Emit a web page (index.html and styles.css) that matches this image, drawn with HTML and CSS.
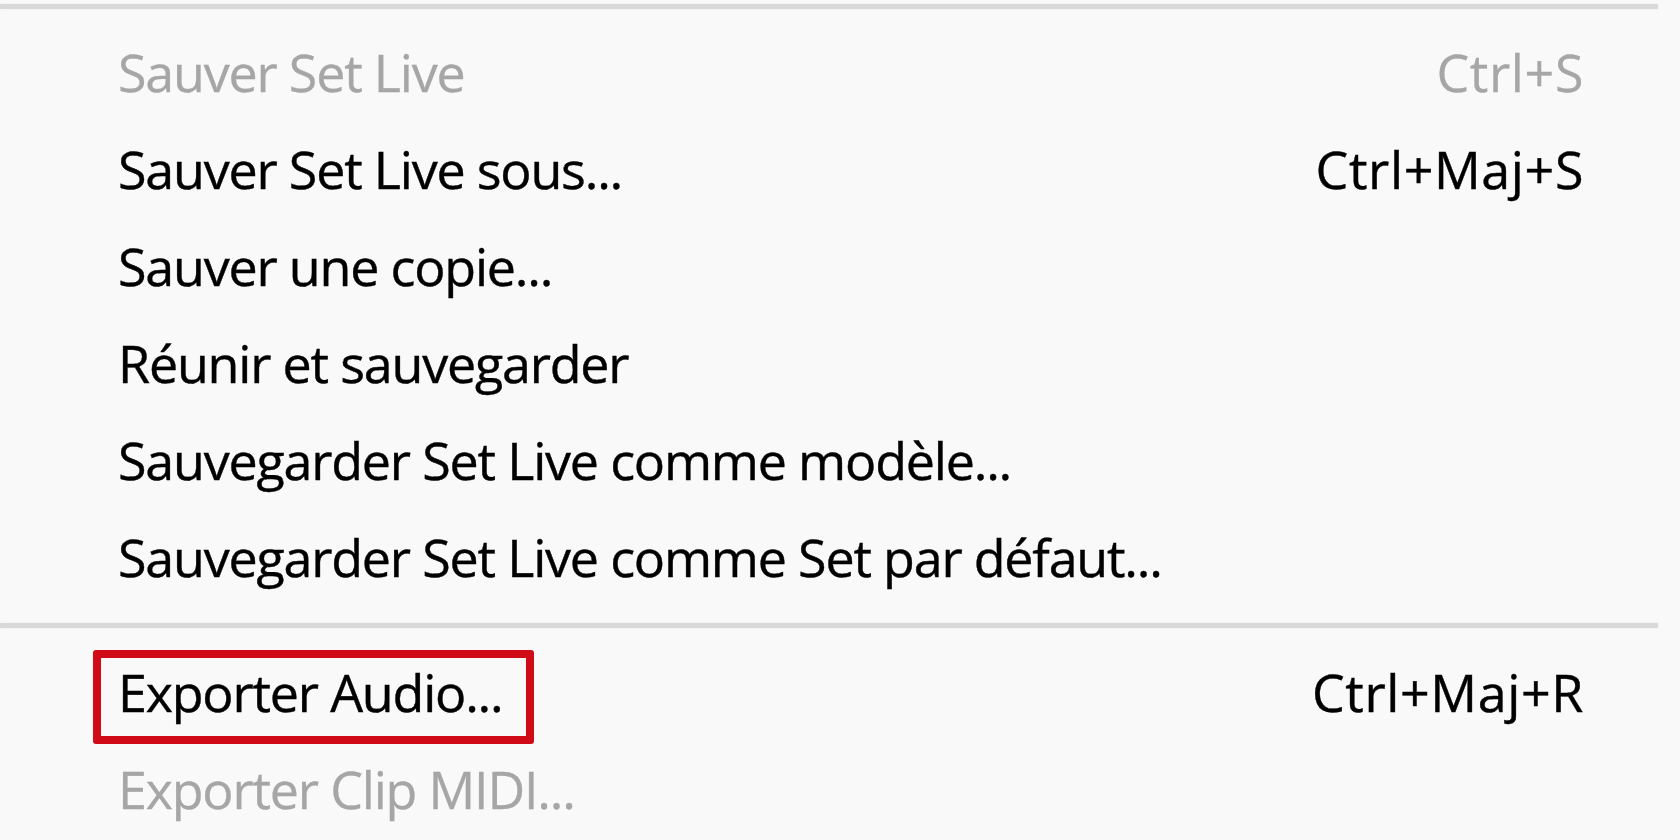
FILE: index.html
```html
<!DOCTYPE html>
<html lang="fr">
<head>
<meta charset="utf-8">
<title>Menu Fichier</title>
<link rel="stylesheet" href="styles.css">
</head>
<body>
<div class="menu">
  <div class="sep sep-top"></div>
  <div class="item disabled"><span class="label">Sauver Set Live</span><span class="key">Ctrl+S</span></div>
  <div class="item"><span class="label">Sauver Set Live sous...</span><span class="key">Ctrl+Maj+S</span></div>
  <div class="item"><span class="label">Sauver une copie...</span></div>
  <div class="item"><span class="label">Réunir et sauvegarder</span></div>
  <div class="item"><span class="label">Sauvegarder Set Live comme modèle...</span></div>
  <div class="item"><span class="label">Sauvegarder Set Live comme Set par défaut...</span></div>
  <div class="sep sep-mid"></div>
  <div class="item marked"><span class="label">Exporter Audio...</span><span class="key">Ctrl+Maj+R</span><span class="highlight"></span></div>
  <div class="item disabled"><span class="label">Exporter Clip MIDI...</span></div>
</div>
</body>
</html>
```

FILE: styles.css
```css
html, body {
  margin: 0;
  padding: 0;
  background: #f9f9f9;
}
body {
  width: 1680px;
  height: 840px;
  overflow: hidden;
  font-family: "Open Sans", "Noto Sans", sans-serif;
  color: #000;
}
.menu {
  display: flex;
  flex-direction: column;
  padding-top: 4px;
}
.sep {
  width: 1658px;
  height: 5px;
  background: #d9d9d9;
  box-shadow: 0 0 2px #e3e3e3;
}
.sep-top {
  margin-bottom: 14px;
}
.sep-mid {
  margin-top: 18px;
  margin-bottom: 15px;
}
.item {
  position: relative;
  display: flex;
  justify-content: space-between;
  align-items: center;
  height: 97px;
  line-height: 97px;
  padding-left: 118px;
  padding-right: 96px;
  font-size: 52px;
  letter-spacing: -1.2px;
  white-space: nowrap;
  -webkit-text-stroke: 0.4px #000;
}
.key {
  letter-spacing: 0.6px;
}
.item.disabled {
  color: #a6a6a6;
  -webkit-text-stroke: 0.3px #a6a6a6;
}
.highlight {
  position: absolute;
  left: 93px;
  top: 7px;
  width: 441px;
  height: 94px;
  box-sizing: border-box;
  border: 8px solid #d00a17;
  border-radius: 3px;
}
```
